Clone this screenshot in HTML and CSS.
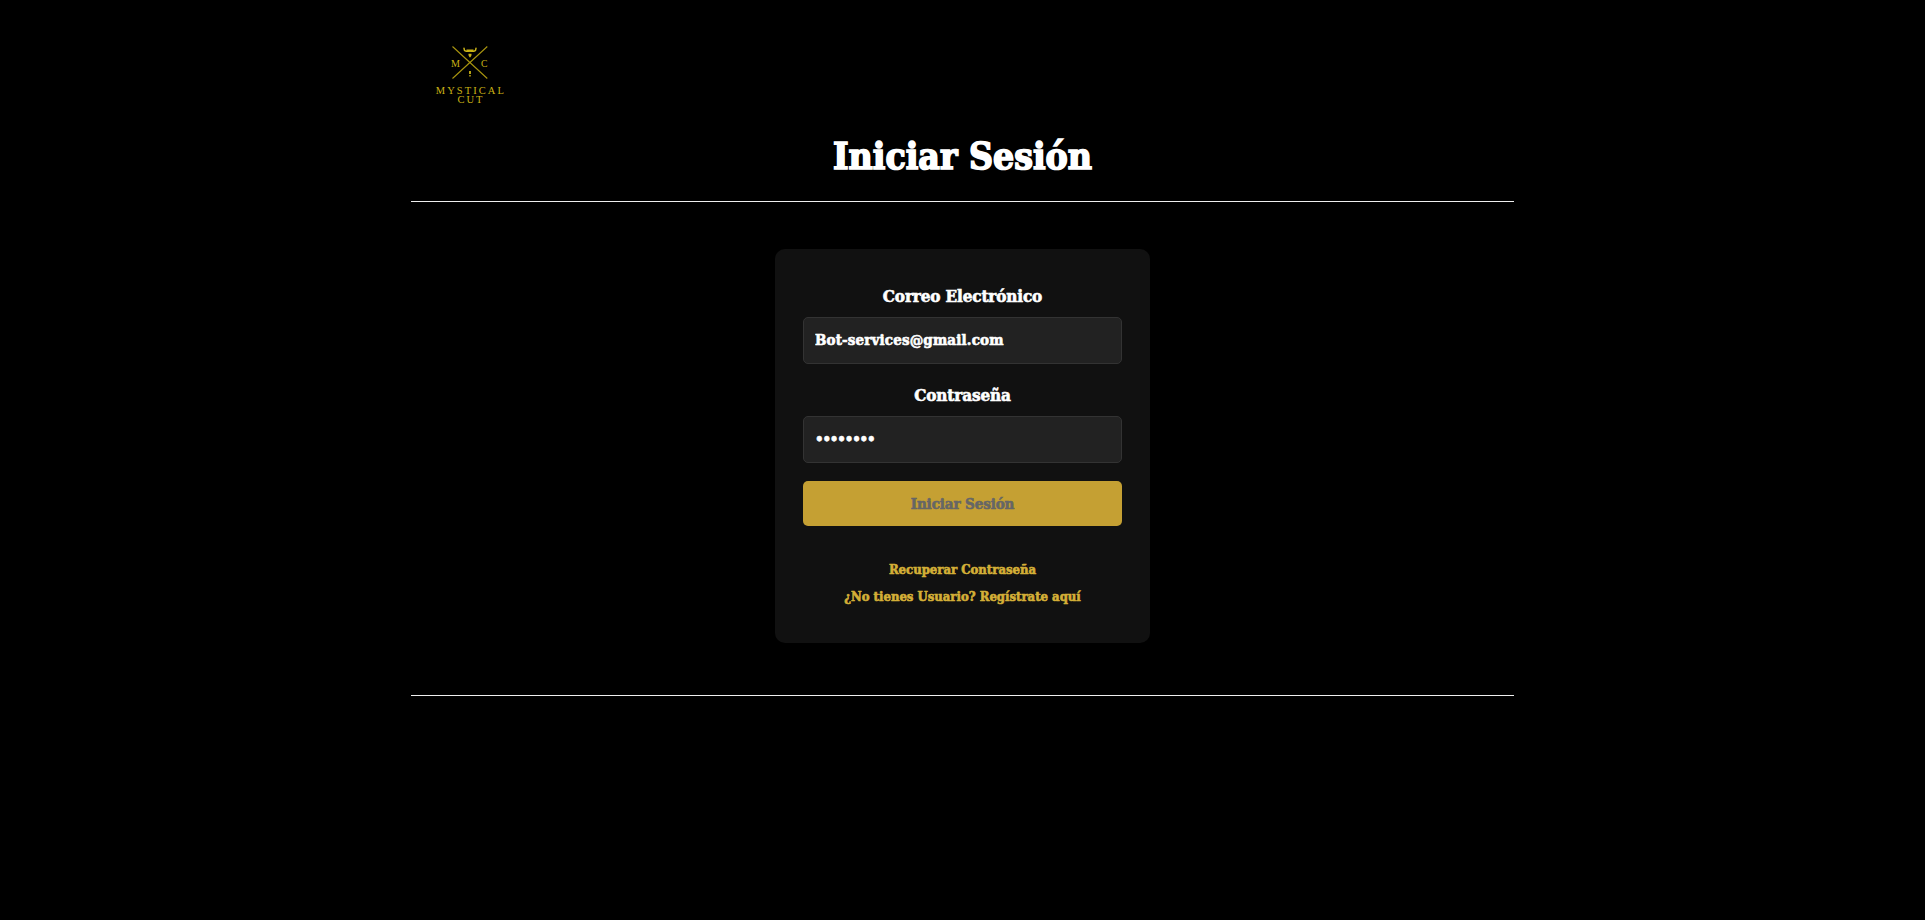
FILE: index.html
```
<!DOCTYPE html>
<html lang="es">
<head>
<meta charset="utf-8">
<title>Mystical Cut - Iniciar Sesión</title>
<link rel="stylesheet" href="styles.css">
</head>
<body>
<div class="page">
  <header class="header">
    <svg class="logo" viewBox="0 0 80 80" role="img" aria-label="Mystical Cut">
      <path class="blades" d="M21.500 16.500 56.300 48.500M56.300 16.500 21.500 48.500"/>
      <path class="mustache" d="M33 18.300C33 21.500 35.500 21.800 39 20.800 42.500 21.800 45 21.500 45 18.300"/>
      <path class="fill" d="M35.500 19.500h7v2.300h-7zM37.500 23.800h3v1.500l-1 2h-1l-1-2zM38.100 41h1.800v3h-1.800zM38.300 45h1.400v1.500h-1.400z"/>
      <text x="20" y="36.600" textLength="9" lengthAdjust="spacingAndGlyphs" class="initial">M</text>
      <text x="50" y="36.600" textLength="6.500" lengthAdjust="spacingAndGlyphs" class="initial">C</text>
      <text x="4.800" y="63.600" textLength="68" class="name">MYSTICAL</text>
      <text x="26.500" y="73.400" textLength="25" class="name">CUT</text>
    </svg>
    <h1 class="title">Iniciar Sesión</h1>
  </header>
  <main class="main">
    <form class="card">
      <label class="label" for="email">Correo Electrónico</label>
      <input class="input email" id="email" type="text" value="Bot-services@gmail.com" spellcheck="false">
      <label class="label" for="pass">Contraseña</label>
      <input class="input password" id="pass" type="password" value="12345678">
      <button class="submit" type="button" disabled>Iniciar Sesión</button>
      <nav class="links">
        <a class="link" href="#">Recuperar Contraseña</a>
        <a class="link" href="#">¿No tienes Usuario? Regístrate aquí</a>
      </nav>
    </form>
  </main>
</div>
</body>
</html>
```
FILE: styles.css
```
* {
  box-sizing: border-box;
}

body {
  margin: 0;
  background: #000;
  color: #fff;
  font-family: "DejaVu Serif Condensed", "DejaVu Serif", serif;
  font-stretch: condensed;
  font-weight: 700;
  -webkit-text-stroke: 0.6px currentColor;
}

.page {
  width: 1103px;
  margin: 0 auto;
}

.header {
  height: 202px;
  padding: 30px 20px 0;
  border-bottom: 1px solid #eee;
}

.logo {
  display: block;
  width: 80px;
  height: 80px;
}

.blades {
  fill: none;
  stroke: #a8940f;
  stroke-width: 1.1;
}

.mustache {
  fill: none;
  stroke: #d0b818;
  stroke-width: 1.5;
  stroke-linecap: round;
}

.fill,
.initial,
.name {
  fill: #c9b215;
}

.initial,
.name {
  font-family: "Liberation Serif", serif;
  font-stretch: normal;
  font-weight: 400;
  -webkit-text-stroke: 0.5px #c9b215;
}

.initial {
  font-size: 10.5px;
}

.name {
  font-size: 10.5px;
}

.title {
  margin: 21px 0 0;
  font-size: 37px;
  line-height: 50px;
  text-align: center;
  letter-spacing: 0;
  -webkit-text-stroke: 1.6px currentColor;
}

.main {
  display: flex;
  justify-content: center;
  height: 494px;
  padding-top: 47px;
  border-bottom: 1px solid #eee;
}

.card {
  display: flex;
  flex-direction: column;
  width: 375px;
  height: 394px;
  padding: 34px 28px 0;
  border-radius: 10px;
  background: #111;
}

.label {
  height: 26px;
  margin-bottom: 8px;
  font-size: 17px;
  line-height: 26px;
  text-align: center;
  letter-spacing: -0.15px;
}

.input {
  width: 319px;
  height: 47px;
  margin: 0 0 18px;
  padding: 0 11px 2px;
  border: 1px solid #333;
  border-radius: 5px;
  outline: 0;
  background: #222;
  color: #fff;
  font: inherit;
  font-size: 15px;
  letter-spacing: 0.15px;
}

.password {
  letter-spacing: -1.2px;
}

.submit {
  height: 45px;
  padding: 0;
  border: 0;
  border-radius: 5px;
  background: #c5a033;
  color: #666;
  font: inherit;
  font-size: 15px;
  letter-spacing: -0.1px;
}

.links {
  display: flex;
  flex-direction: column;
  align-items: center;
  margin-top: 30px;
}

.link {
  color: #d4af37;
  font-size: 13px;
  line-height: 27px;
  text-decoration: none;
  white-space: nowrap;
}
```
